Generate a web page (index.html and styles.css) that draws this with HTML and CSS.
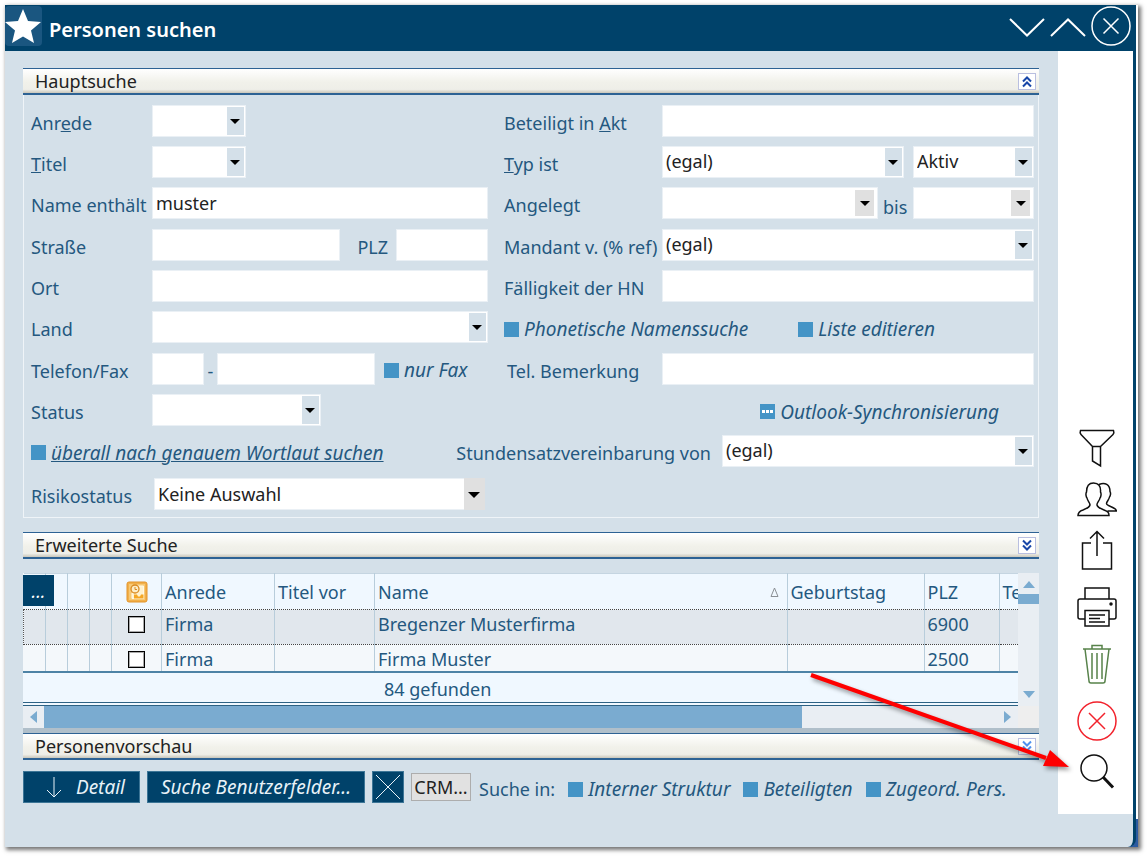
FILE: index.html
```html
<!DOCTYPE html>
<html lang="de">
<head>
<meta charset="utf-8">
<title>Personen suchen</title>
<link rel="stylesheet" href="styles.css">
</head>
<body>
<div class="frame">
<div class="window">
  <header class="titlebar">
    <svg class="star" viewBox="0 0 37 40" aria-hidden="true"><rect width="37" height="40" rx="4" fill="#1a5680"/><path d="M18 3l5 12 13 1-10 8.500 3 12.500-11-6.500L7 37l3-12.500L0 16l13-1z" fill="#fff"/></svg>
    <h1 class="title">Personen suchen</h1>
    <div class="window-buttons">
      <button class="wbtn" aria-label="Nach unten"><svg width="36" height="40" viewBox="0 0 36 40"><path d="M1 13l17 16.500L35 13"/></svg></button>
      <button class="wbtn" aria-label="Nach oben"><svg width="36" height="40" viewBox="0 0 36 40"><path d="M1 30l17-16.500L35 30"/></svg></button>
      <button class="wbtn" aria-label="Schließen"><svg width="40" height="40" viewBox="0 0 40 40"><circle cx="20" cy="20" r="19" stroke-width="1.500"/><path d="M12.500 12.500l15 15M27.500 12.500l-15 15" stroke-width="1.500"/></svg></button>
    </div>
  </header>

  <div class="body">
    <main class="main">
      <section class="panel">
        <div class="bar"><h2 class="bar-title">Hauptsuche</h2>
          <button class="fold" aria-label="Hauptsuche zuklappen"><svg viewBox="0 0 16 15"><path d="M4 7.500l4-4 4 4M4 12.500l4-4 4 4"/></svg></button></div>
        <form class="form">
          <div class="group">
            <div class="row">
              <div class="half"><label class="label" for="anrede">Anr<u>e</u>de</label><span class="select w-small"><select id="anrede"><option></option></select></span></div>
              <div class="half right"><label class="label" for="akt">Beteiligt in <u>A</u>kt</label><input class="text grow" id="akt" type="text"></div>
            </div>
            <div class="row">
              <div class="half"><label class="label" for="titel"><u>T</u>itel</label><span class="select w-small"><select id="titel"><option></option></select></span></div>
              <div class="half right"><label class="label" for="typ"><u>T</u>yp ist</label><span class="select grow"><select id="typ"><option>(egal)</option></select></span><span class="select w-state"><select aria-label="Status des Typs"><option>Aktiv</option></select></span></div>
            </div>
            <div class="row">
              <div class="half"><label class="label" for="name">Name enthält</label><input class="text grow" id="name" type="text" value="muster"></div>
              <div class="half right"><label class="label" for="von">Angelegt</label><span class="select date grow"><select id="von"><option></option></select></span><label class="between" for="bis">bis</label><span class="select date w-state"><select id="bis"><option></option></select></span></div>
            </div>
          </div>
          <div class="group">
            <div class="row">
              <div class="half"><label class="label" for="strasse">Straße</label><input class="text grow" id="strasse" type="text"><label class="plz" for="plz">PLZ</label><input class="text w-plz" id="plz" type="text"></div>
              <div class="half right"><label class="label" for="mandant">Mandant v. (% ref)</label><span class="select grow"><select id="mandant"><option>(egal)</option></select></span></div>
            </div>
            <div class="row">
              <div class="half"><label class="label" for="ort">Ort</label><input class="text grow" id="ort" type="text"></div>
              <div class="half right"><label class="label" for="hn">Fälligkeit der HN</label><input class="text grow" id="hn" type="text"></div>
            </div>
            <div class="row">
              <div class="half"><label class="label" for="land">Land</label><span class="select grow"><select id="land"><option></option></select></span></div>
              <div class="half right checks"><label class="check"><input type="checkbox">Phonetische Namenssuche</label><label class="check"><input type="checkbox">Liste editieren</label></div>
            </div>
          </div>
          <div class="group">
            <div class="row">
              <div class="half"><label class="label" for="tel">Telefon/Fax</label><input class="text w-area" id="tel" type="text"><span class="dash">-</span><input class="text grow" type="text" aria-label="Rufnummer"><label class="check fax"><input type="checkbox">nur Fax</label></div>
              <div class="half right indent"><label class="label" for="bem">Tel. Bemerkung</label><input class="text grow" id="bem" type="text"></div>
            </div>
            <div class="row">
              <div class="half"><label class="label" for="status">Status</label><span class="select w-medium"><select id="status"><option></option></select></span></div>
              <div class="half right sync"><label class="check"><input class="partial" type="checkbox">Outlook-Synchronisierung</label></div>
            </div>
            <div class="row rate">
              <label class="check underlined"><input type="checkbox"><span>überall nach genauem Wortlaut suchen</span></label>
              <label class="rate-label" for="satz">Stundensatzvereinbarung von</label><span class="select w-rate"><select id="satz"><option>(egal)</option></select></span>
            </div>
          </div>
          <div class="row risk">
            <div class="half"><label class="label" for="risiko">Risikostatus</label><span class="select plain grow"><select id="risiko"><option>Keine Auswahl</option></select></span></div>
          </div>
        </form>
      </section>

      <div class="bar extended"><h2 class="bar-title">Erweiterte Suche</h2>
        <button class="fold" aria-label="Erweiterte Suche aufklappen"><svg viewBox="0 0 16 15"><path d="M4 2.500l4 4 4-4M4 7.500l4 4 4-4"/></svg></button></div>

      <section class="results">
        <button class="more">...</button>
        <div class="grid">
          <div class="rows">
            <table>
              <colgroup><col class="c-tiny"><col class="c-tiny"><col class="c-tiny"><col class="c-tiny"><col class="c-icon"><col class="c-anrede"><col class="c-titel"><col><col class="c-geb"><col class="c-plz"><col class="c-last"></colgroup>
              <thead><tr><th></th><th></th><th></th><th></th>
                <th class="center"><svg width="22" height="22" viewBox="0 0 22 22" aria-label="Outlook"><rect x="1" y="1" width="20" height="20" rx="2" fill="#f2b04a" stroke="#e2932a"/><rect x="3" y="3" width="16" height="16" fill="#f7c976"/><path d="M11 5h6.500v12.500H6V12" fill="#fff2cf" stroke="#fff8e6"/><circle cx="9" cy="8" r="4" fill="#fdedc6" stroke="#d98a22" stroke-width="1.300"/><path d="M9 6v2.500h2" fill="none" stroke="#d98a22"/><path d="M8 13.500h3l1 2h2l1-2h2.500v4H8z" fill="#f5a623"/></svg></th>
                <th>Anrede</th><th>Titel vor</th><th><span class="sorted">Name<svg width="9" height="10" viewBox="0 0 9 10" aria-hidden="true"><path d="M4.500 1L8 9.500H1z" fill="none" stroke="#8a8f94"/></svg></span></th><th>Geburtstag</th><th>PLZ</th><th>Te</th></tr></thead>
              <tbody>
                <tr class="current"><td></td><td></td><td></td><td></td><td class="center"><input type="checkbox" aria-label="Bregenzer Musterfirma"></td><td>Firma</td><td></td><td>Bregenzer Musterfirma</td><td></td><td>6900</td><td></td></tr>
                <tr><td></td><td></td><td></td><td></td><td class="center"><input type="checkbox" aria-label="Firma Muster"></td><td>Firma</td><td></td><td>Firma Muster</td><td></td><td>2500</td><td></td></tr>
              </tbody>
            </table>
          </div>
          <div class="count">84 gefunden</div>
        </div>
        <div class="vscroll">
          <svg width="12" height="7" viewBox="0 0 12 7"><path d="M6 0l6 7H0z"/></svg>
          <span class="vthumb"></span>
          <svg class="down" width="12" height="7" viewBox="0 0 12 7"><path d="M6 7l6-7H0z"/></svg>
        </div>
        <div class="hscroll">
          <svg width="7" height="12" viewBox="0 0 7 12"><path d="M0 6l7-6v12z"/></svg>
          <span class="track"><span class="hthumb"></span></span>
          <svg width="7" height="12" viewBox="0 0 7 12"><path d="M7 6L0 0v12z"/></svg>
        </div>
        <div class="corner"></div>
      </section>

      <div class="bar preview"><h2 class="bar-title">Personenvorschau</h2>
        <button class="fold light" aria-label="Personenvorschau aufklappen"><svg viewBox="0 0 16 15"><path d="M4 2.500l4 4 4-4M4 7.500l4 4 4-4"/></svg></button></div>

      <div class="actions">
        <button class="dark detail"><svg width="16" height="22" viewBox="0 0 16 22" aria-hidden="true"><path d="M8 1v20M1 14l7 7 7-7"/></svg>Detail</button>
        <button class="dark fields">Suche Benutzerfelder...</button>
        <button class="dark clear" aria-label="Leeren"><svg width="24" height="24" viewBox="0 0 24 24"><path d="M0 0l24 24M24 0L0 24"/></svg></button>
        <button class="crm">CRM...</button>
        <span class="search-in">Suche in:</span>
        <label class="check"><input type="checkbox">Interner Struktur</label>
        <label class="check"><input type="checkbox">Beteiligten</label>
        <label class="check"><input type="checkbox">Zugeord. Pers.</label>
      </div>
    </main>

    <aside class="tools">
      <button class="tool" aria-label="Filter"><svg viewBox="0 0 40 40"><path d="M3.500 2.500h33q1 2.500-.500 4L23.500 18.500h-8L4 6.500q-1.500-1.500-.500-4zM15.500 18.500V33l8 5V18.500"/></svg></button>
      <button class="tool" aria-label="Personen"><svg viewBox="0 0 40 40"><path d="M1 36.500c0-3 2-4.500 5-5.500 4-1.500 6.500-2.500 7-5 .3-2-2.500-4-3-7-1-1-1.500-4.500-.500-6 0-6 2-9 7-9s7.500 3 7 9c1 1.500.500 5-.500 6-.500 3-3.500 5-3 7 .5 2.500 3 3.500 7 5s5 2.500 5 5.500zM22 5.500c6-2.500 11 0 11 7 1 1.500.500 4.500-.500 5.500-.5 3-3 4.500-3 6.500 0 3 9 3 10 7.500h-9"/></svg></button>
      <button class="tool" aria-label="Exportieren"><svg viewBox="0 0 40 40"><path d="M14 13H5.500v26h29V13H26M20 26V1.500M13 8.500l7-7 7 7"/></svg></button>
      <button class="tool apart" aria-label="Drucken"><svg viewBox="0 0 40 40"><path d="M8 12V1h24v11M8 32H3q-2 0-2-2V14q0-2 2-2h34q2 0 2 2v16q0 2-2 2h-5M8 23.500h24V39H8zM12 28h16M12 31.500h11M12 35h16"/><circle cx="34" cy="17" r="1" fill="#111"/></svg></button>
      <button class="tool apart delete" aria-label="Löschen"><svg viewBox="0 0 40 40"><path d="M6 5h28M8 5l4 32q0 2 2 2h12q2 0 2-2l4-32M15 5V1.500h10V5M15 9v26M20 9v26M25 9v26"/></svg></button>
      <button class="tool apart cancel" aria-label="Abbrechen"><svg viewBox="0 0 40 40"><circle cx="20" cy="20" r="19"/><path d="M12 12l16 16M28 12L12 28"/></svg></button>
      <button class="tool" aria-label="Suchen"><svg viewBox="0 0 40 40"><circle cx="17" cy="16" r="13"/><path d="M26 25l10 10.500" stroke-width="3"/></svg></button>
    </aside>
  </div>
  <svg class="pointer" width="264" height="104" viewBox="0 0 264 104" aria-hidden="true"><path d="M1 3L236 86" stroke="#fe0000" stroke-width="4" fill="none"/><path d="M259 95L233 94L240 78z" fill="#fe0000"/></svg>
</div>
</div>
</body>
</html>
```
FILE: styles.css
```css
* { box-sizing: border-box; }

body {
  margin: 0;
  padding: 5px 9px 9px 5px;
  background: #fff;
  color: #24587f;
  font: 18px/24px "Noto Sans", "Open Sans", sans-serif;
}
button, input, select { font: inherit; color: inherit; margin: 0; padding: 0; border: 0; border-radius: 0; }
h1, h2 { margin: 0; font: inherit; }
svg { display: block; flex: none; }

.frame {
  padding-right: 2px;
  background: linear-gradient(#2b5aa0, #2b5aa0) right bottom / 12px 28px no-repeat, #fff;
  box-shadow: 2px 2px 4px 1px #777;
}
.window {
  position: relative;
  background: #d4e0e9;
  border-right: 3px solid #00426a;
  border-bottom-right-radius: 8px;
}
.titlebar {
  display: flex;
  align-items: center;
  height: 46px;
  padding-right: 2px;
  background: #00426a;
  color: #fff;
}
.star { width: 37px; height: 40px; margin-bottom: 4px; }
.title { flex: 1; padding: 4px 0 0 7px; font-size: 20px; font-weight: 600; }
.window-buttons { display: flex; gap: 5px; margin-bottom: 4px; }
.wbtn { background: none; }
.wbtn svg { fill: none; stroke: #fff; stroke-width: 2; }

.body { display: flex; }
.main { flex: 1; min-width: 0; padding: 17px 19px 44px 18px; }

.bar {
  display: flex;
  align-items: center;
  justify-content: space-between;
  height: 27px;
  padding: 0 4px 0 12px;
  border-top: 1px solid #2d6294;
  border-bottom: 2px solid #2d6294;
  background: linear-gradient(#fff, #f1f1ea 55%, #eeeee8 85%, #c9c6ba);
  color: #222;
}
.fold { width: 16px; height: 15px; background: #fff; outline: 1px solid #b9bfe0; color: #1746a8; }
.fold svg { width: 16px; height: 15px; fill: none; stroke: currentColor; stroke-width: 2; }
.fold.light { color: #4e92f0; }

.form {
  display: flex;
  flex-direction: column;
  gap: 10px;
  padding: 10px 4px 7px 7px;
  border: 1px solid #eff4f8;
  border-top: 0;
}
.group { display: flex; flex-direction: column; gap: 9px; }
.row { display: grid; grid-template-columns: 457px 1fr; column-gap: 16px; height: 32px; }
.half { display: flex; min-width: 0; }
.label { width: 121px; padding-top: 6px; white-space: nowrap; }
.right .label { width: 158px; }
.right.indent { padding-left: 3px; }
.right.indent .label { width: 155px; }
.grow { flex: 1; min-width: 0; }

.text { height: 32px; padding: 0 3px; border: 1px solid #eaf0f5; background: #fff; color: #222; }
.select { position: relative; height: 32px; color: #222; }
.select select {
  width: 100%;
  height: 100%;
  padding: 0 22px 2px 3px;
  border: 1px solid #eaf0f5;
  background: #fff;
  appearance: none;
}
.select::before {
  content: "";
  position: absolute;
  inset: 2px 2px 2px auto;
  width: 17px;
  background: #d4e0e9;
  pointer-events: none;
}
.select::after {
  content: "";
  position: absolute;
  top: 14px;
  right: 6px;
  border: 5px solid transparent;
  border-top-color: #000;
  border-bottom: 0;
  pointer-events: none;
}
.date::before { inset: 3px 4px 3px auto; width: 19px; background: #e0e0e0; }
.date::after { right: 8px; }
.plain { margin-left: 2px; }
.plain select { padding-bottom: 0; }
.plain::before { inset: 0 0 0 auto; width: 21px; background: #e0e0e0; }
.plain::after { right: 5px; border-width: 6px 6px 0; }

.w-small { width: 94px; }
.w-medium { width: 169px; }
.w-state { width: 121px; }
.w-plz { width: 92px; }
.w-area { width: 52px; }
.w-rate { flex: 0 1 312px; }
.select + .w-state { margin-left: 9px; }
.between { width: 35px; padding: 8px 0 0 5px; }
.between + .w-state { margin-left: 0; }
.plz { padding: 6px 8px 0 17px; }
.dash { width: 13px; padding-top: 6px; text-align: center; }

.check { display: flex; align-items: center; gap: 5px; font-size: 19px; font-style: italic; white-space: nowrap; }
.check input { flex: none; width: 15px; height: 15px; background: #4494c6; appearance: none; }
.check .partial {
  background: linear-gradient(90deg, #fff 3px, transparent 3px, transparent 4px, #fff 4px, #fff 7px, transparent 7px, transparent 8px, #fff 8px) 2px 6px / 11px 3px no-repeat, #4494c6;
}
.fax { width: 113px; padding: 2px 0 0 9px; }
.checks { gap: 50px; padding-top: 4px; }
.sync { justify-content: flex-end; padding: 3px 35px 0 0; }
.underlined { padding-top: 3px; }
.underlined span { text-decoration: underline; }
.rate { display: flex; column-gap: 11px; }
.rate-label { margin-left: auto; padding-top: 6px; white-space: nowrap; }
.risk { margin-top: 1px; }
.risk .half { padding-right: 3px; }

.extended { margin-top: 14px; }
.results {
  position: relative;
  display: grid;
  grid-template-columns: minmax(0, 1fr) 21px;
  margin-top: 14px;
  border-bottom: 5px solid #b0bfca;
}
.more {
  position: absolute;
  top: 2px;
  left: 0;
  width: 31px;
  height: 31px;
  background: #00426a;
  color: #fff;
  font-style: italic;
}
.grid { min-width: 0; }
.rows { height: 98px; overflow: hidden; background: #f4f8fb; }
table { width: 100%; table-layout: fixed; border-collapse: collapse; }
th, td {
  height: 35px;
  padding: 3px 0 0 3px;
  border-right: 1px solid #b8cddb;
  font-weight: 400;
  line-height: 22px;
  text-align: left;
  vertical-align: top;
  white-space: nowrap;
  overflow: hidden;
}
th { height: 36px; padding: 0 0 0 3px; vertical-align: middle; background: #f0f8ff; border-top: 1px solid #c5d5e1; }
th:last-child, td:last-child { border-right: 0; }
th.center { padding: 0; }
td.center { padding: 6px 0 0; }
.center svg, .center input { margin: 0 auto; }
.current td { background: #e1e7ed; border-top: 1px dotted #444; border-bottom: 1px dotted #444; }
.current td:first-child { border-left: 1px dotted #555; }
td input { display: block; width: 17px; height: 17px; border: 1px solid #000; outline: 1px solid #aaa; outline-offset: -2px; background: #fff; appearance: none; }
.sorted { display: flex; align-items: center; justify-content: space-between; padding-right: 8px; }
.c-tiny { width: 22px; }
.c-icon { width: 50px; }
.c-anrede { width: 113px; }
.c-titel { width: 100px; }
.c-geb { width: 137px; }
.c-plz { width: 75px; }
.c-last { width: 19px; }
.count {
  height: 35px;
  padding: 4px 0 0 361px;
  border-top: 2px solid #4d83a6;
  border-bottom: 4px double #2d6284;
  background: #f0f8ff;
}
.vscroll, .hscroll { display: flex; align-items: center; background: #e9eef3; fill: #7aabd0; }
.vscroll { flex-direction: column; padding: 8px 0; }
.vthumb { width: 100%; height: 10px; margin-top: 6px; background: #7aabd0; }
.down { margin-top: auto; }
.hscroll { gap: 7px; height: 22px; padding: 0 7px; }
.track { flex: 1; align-self: stretch; }
.hthumb { display: block; width: 79.5%; height: 100%; background: #7aabd0; }
.corner { background: #eee; }

.actions { display: flex; align-items: center; margin-top: 11px; }
.dark { display: flex; align-items: center; justify-content: center; height: 32px; border: 1px solid #3c7596; background: #00426a; color: #e8f2f8; font-size: 19px; font-style: italic; white-space: nowrap; }
.dark svg { fill: none; stroke: #e8f2f8; stroke-width: 1; }
.detail { width: 117px; gap: 14px; padding-left: 8px; }
.fields { width: 218px; margin-left: 7px; }
.clear { width: 32px; margin-left: 7px; }
.crm { width: 60px; height: 28px; margin-left: 7px; border: 1px solid #adadad; background: #e1e1e1; color: #222; }
.search-in { padding: 4px 0 0 8px; white-space: nowrap; }
.actions .check { margin-left: 13px; padding-top: 4px; }

.tools {
  display: flex;
  flex-direction: column;
  align-items: center;
  justify-content: flex-end;
  gap: 11px;
  width: 75px;
  margin-bottom: 33px;
  padding: 0 0 22px 2px;
  background: #fff;
}
.tool { width: 40px; height: 40px; background: none; }
.tool svg { width: 40px; height: 40px; fill: none; stroke: #111; stroke-width: 1.500; }
.apart { margin-top: 6px; }
.delete svg { stroke: #57824a; }
.cancel svg { stroke: #f2222c; }

.pointer { position: absolute; right: 59px; bottom: 71px; filter: drop-shadow(2px 3px 2px rgba(0, 0, 0, 0.4)); pointer-events: none; }
```
